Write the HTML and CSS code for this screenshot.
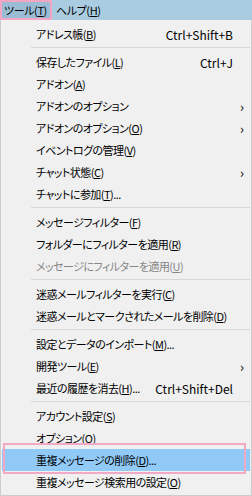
FILE: index.html
```html
<!DOCTYPE html>
<html lang="ja">
<head>
<meta charset="utf-8">
<link rel="stylesheet" href="styles.css">
</head>
<body>
<div class="menubar">
  <span class="top active">ツール(<u>T</u>)</span>
  <span class="top">ヘルプ(<u>H</u>)</span>
</div>
<div class="dropdown">
  <div class="item"><span class="label">アドレス帳(<u>B</u>)</span><span class="key">Ctrl+Shift+B</span><span class="arrow"></span></div>
  <div class="sep"></div>
  <div class="item"><span class="label">保存したファイル(<u>L</u>)</span><span class="key">Ctrl+J</span><span class="arrow"></span></div>
  <div class="item"><span class="label">アドオン(<u>A</u>)</span><span class="key"></span><span class="arrow"></span></div>
  <div class="item"><span class="label">アドオンのオプション</span><span class="key"></span><span class="arrow">›</span></div>
  <div class="item"><span class="label">アドオンのオプション(<u>O</u>)</span><span class="key"></span><span class="arrow">›</span></div>
  <div class="item"><span class="label">イベントログの管理(<u>V</u>)</span><span class="key"></span><span class="arrow"></span></div>
  <div class="item"><span class="label">チャット状態(<u>C</u>)</span><span class="key"></span><span class="arrow">›</span></div>
  <div class="item"><span class="label">チャットに参加(<u>T</u>)...</span><span class="key"></span><span class="arrow"></span></div>
  <div class="sep"></div>
  <div class="item"><span class="label">メッセージフィルター(<u>F</u>)</span><span class="key"></span><span class="arrow"></span></div>
  <div class="item"><span class="label">フォルダーにフィルターを適用(<u>R</u>)</span><span class="key"></span><span class="arrow"></span></div>
  <div class="item disabled"><span class="label">メッセージにフィルターを適用(<u>U</u>)</span><span class="key"></span><span class="arrow"></span></div>
  <div class="sep"></div>
  <div class="item"><span class="label">迷惑メールフィルターを実行(<u>C</u>)</span><span class="key"></span><span class="arrow"></span></div>
  <div class="item"><span class="label">迷惑メールとマークされたメールを削除(<u>D</u>)</span><span class="key"></span><span class="arrow"></span></div>
  <div class="sep"></div>
  <div class="item"><span class="label">設定とデータのインポート(<u>M</u>)...</span><span class="key"></span><span class="arrow"></span></div>
  <div class="item"><span class="label">開発ツール(<u>E</u>)</span><span class="key"></span><span class="arrow">›</span></div>
  <div class="item"><span class="label">最近の履歴を消去(<u>H</u>)...</span><span class="key">Ctrl+Shift+Del</span><span class="arrow"></span></div>
  <div class="sep"></div>
  <div class="item"><span class="label">アカウント設定(<u>S</u>)</span><span class="key"></span><span class="arrow"></span></div>
  <div class="item"><span class="label">オプション(<u>O</u>)</span><span class="key"></span><span class="arrow"></span></div>
  <div class="item hover"><span class="label">重複メッセージの削除(<u>D</u>)...</span><span class="key"></span><span class="arrow"></span><span class="mark"></span></div>
  <div class="item"><span class="label">重複メッセージ検索用の設定(<u>O</u>)</span><span class="key"></span><span class="arrow"></span></div>
</div>
</body>
</html>
```
FILE: styles.css
```css
html, body {
  margin: 0;
  padding: 0;
}
body {
  width: 252px;
  height: 496px;
  background: #f9f9f9;
  font-family: "Noto Sans CJK JP", "Noto Sans", sans-serif;
  font-size: 12px;
  color: #000;
  overflow: hidden;
}
u {
  text-decoration: underline;
  text-underline-offset: 1px;
}
.menubar {
  height: 20px;
  background: #a9cce1;
  display: flex;
  align-items: stretch;
}
.top {
  display: flex;
  align-items: center;
  padding: 0 5px 0 4px;
  white-space: nowrap;
  font-size: 11px;
  letter-spacing: -0.4px;
  font-feature-settings: "palt";
}
.top.active {
  background: #9abdd5;
  box-shadow: inset 0 0 0 2px #f2a6c3;
  box-sizing: border-box;
  width: 52px;
  padding: 0 0 0 4px;
}
.dropdown {
  background: #f0f0f0;
  border: 1px solid #cccccc;
  border-top: none;
  padding: 3px 1px 2px 1px;
  width: 248px;
}
.item {
  position: relative;
  height: 22px;
  display: grid;
  grid-template-columns: 1fr auto 17px;
  align-items: center;
  padding-left: 34px;
  white-space: nowrap;
}
.label {
  font-size: 11px;
  letter-spacing: -0.55px;
  font-feature-settings: "palt";
}
.key {
  text-align: right;
}
.arrow {
  text-align: right;
  padding-right: 6px;
  font-size: 13px;
  line-height: 1;
}
.item.disabled {
  color: #858585;
}
.item.hover {
  background: #91c9f7;
}
.mark {
  position: absolute;
  left: 1px;
  right: 4px;
  top: -6px;
  bottom: -3px;
  border: 2px solid #f3a8c6;
  pointer-events: none;
}
.sep {
  height: 1px;
  background: #d7d7d7;
  margin: 2px 0 3px 29px;
}
```
